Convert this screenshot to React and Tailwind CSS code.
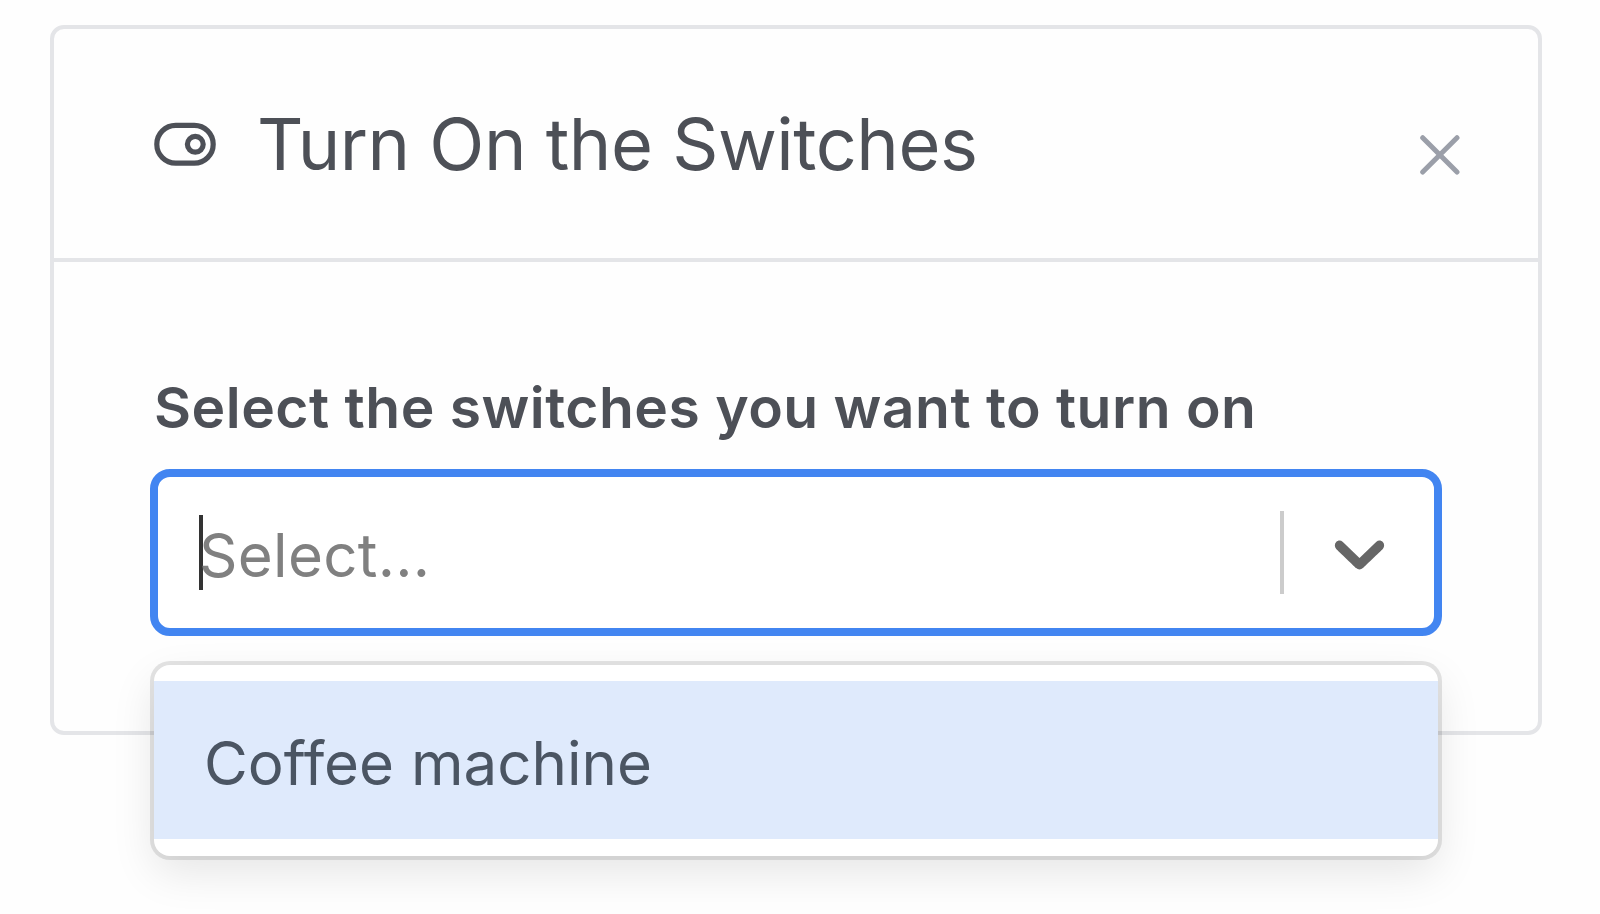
function SwitchIcon() {
  return (
    <svg className="h-[44px] w-[62px] shrink-0" viewBox="0 0 62 44" fill="none" stroke="currentColor" strokeWidth="5.2">
      <rect x="2.8" y="3.4" width="56.4" height="37.8" rx="18.9" />
      <circle cx="41.3" cy="22.3" r="7.9" />
    </svg>
  );
}

function CloseIcon() {
  return (
    <svg className="size-[40px]" viewBox="0 0 40 40" fill="none" stroke="currentColor" strokeWidth="5" strokeLinecap="round">
      <path d="M2.7 2.7 37 37M37 2.7 2.7 37" />
    </svg>
  );
}

function ChevronIcon() {
  return (
    <svg className="size-[85px]" viewBox="0 0 20 20" fill="currentColor">
      <path d="M4.516 7.548c0.436-0.446 1.043-0.481 1.576 0l3.908 3.747 3.908-3.747c0.533-0.481 1.141-0.446 1.574 0 0.436 0.445 0.408 1.197 0 1.615-0.406 0.418-4.695 4.502-4.695 4.502-0.217 0.223-0.502 0.335-0.787 0.335s-0.57-0.112-0.789-0.335c0 0-4.287-4.084-4.695-4.502s-0.436-1.17 0-1.615z" />
    </svg>
  );
}

export default function App() {
  return (
    <main className="h-[914px] overflow-hidden bg-[#fefefe] pt-[25px] pl-[50px] font-['Inter','Liberation_Sans',sans-serif] text-[#4d5057]">
      <section className="h-[710px] w-[1492px] rounded-[14px] border-4 border-[#e4e5e8]">
        <header className="flex h-[233px] items-center border-b-4 border-[#e4e5e8] pr-[78px] pl-[100px]">
          <SwitchIcon />
          <h1 className="ml-[41px] text-[72px] leading-[88px] tracking-[-0.48px] whitespace-nowrap">Turn On the Switches</h1>
          <button className="mt-[22px] ml-auto text-[#9b9fa9]" aria-label="Close">
            <CloseIcon />
          </button>
        </header>
        <div className="px-[96px] pt-[108px]">
          <label className="ml-1 block w-max text-[57px] leading-[76px] font-semibold tracking-[0.49px] whitespace-nowrap">
            Select the switches you want to turn on
          </label>
          <div className="relative mt-[23px]">
            <div className="flex h-[167px] items-center rounded-[20px] border-8 border-[#4285f1] bg-white pl-[41px]">
              <span className="h-[75px] w-[4px] bg-[#333]" />
              <span className="-ml-[4px] pt-[5px] text-[60px] leading-[76px] tracking-[0.3px] text-[#808080]">Select...</span>
              <span className="ml-auto h-[83px] w-[4px] bg-[#ccc]" />
              <span className="mr-[32px] ml-[33px] text-[#666]">
                <ChevronIcon />
              </span>
            </div>
            <div className="absolute top-[196px] right-[4px] left-[4px] h-[191px] rounded-[16px] bg-white py-[16px] shadow-[0_0_0_4px_rgba(0,0,0,0.1),0_16px_44px_rgba(0,0,0,0.1)]">
              <div className="flex h-[158px] items-center bg-[#dfeafc] pt-[6px] pl-[50px] text-[60px] text-[#4b5563]">
                Coffee machine
              </div>
            </div>
          </div>
        </div>
      </section>
    </main>
  );
}
